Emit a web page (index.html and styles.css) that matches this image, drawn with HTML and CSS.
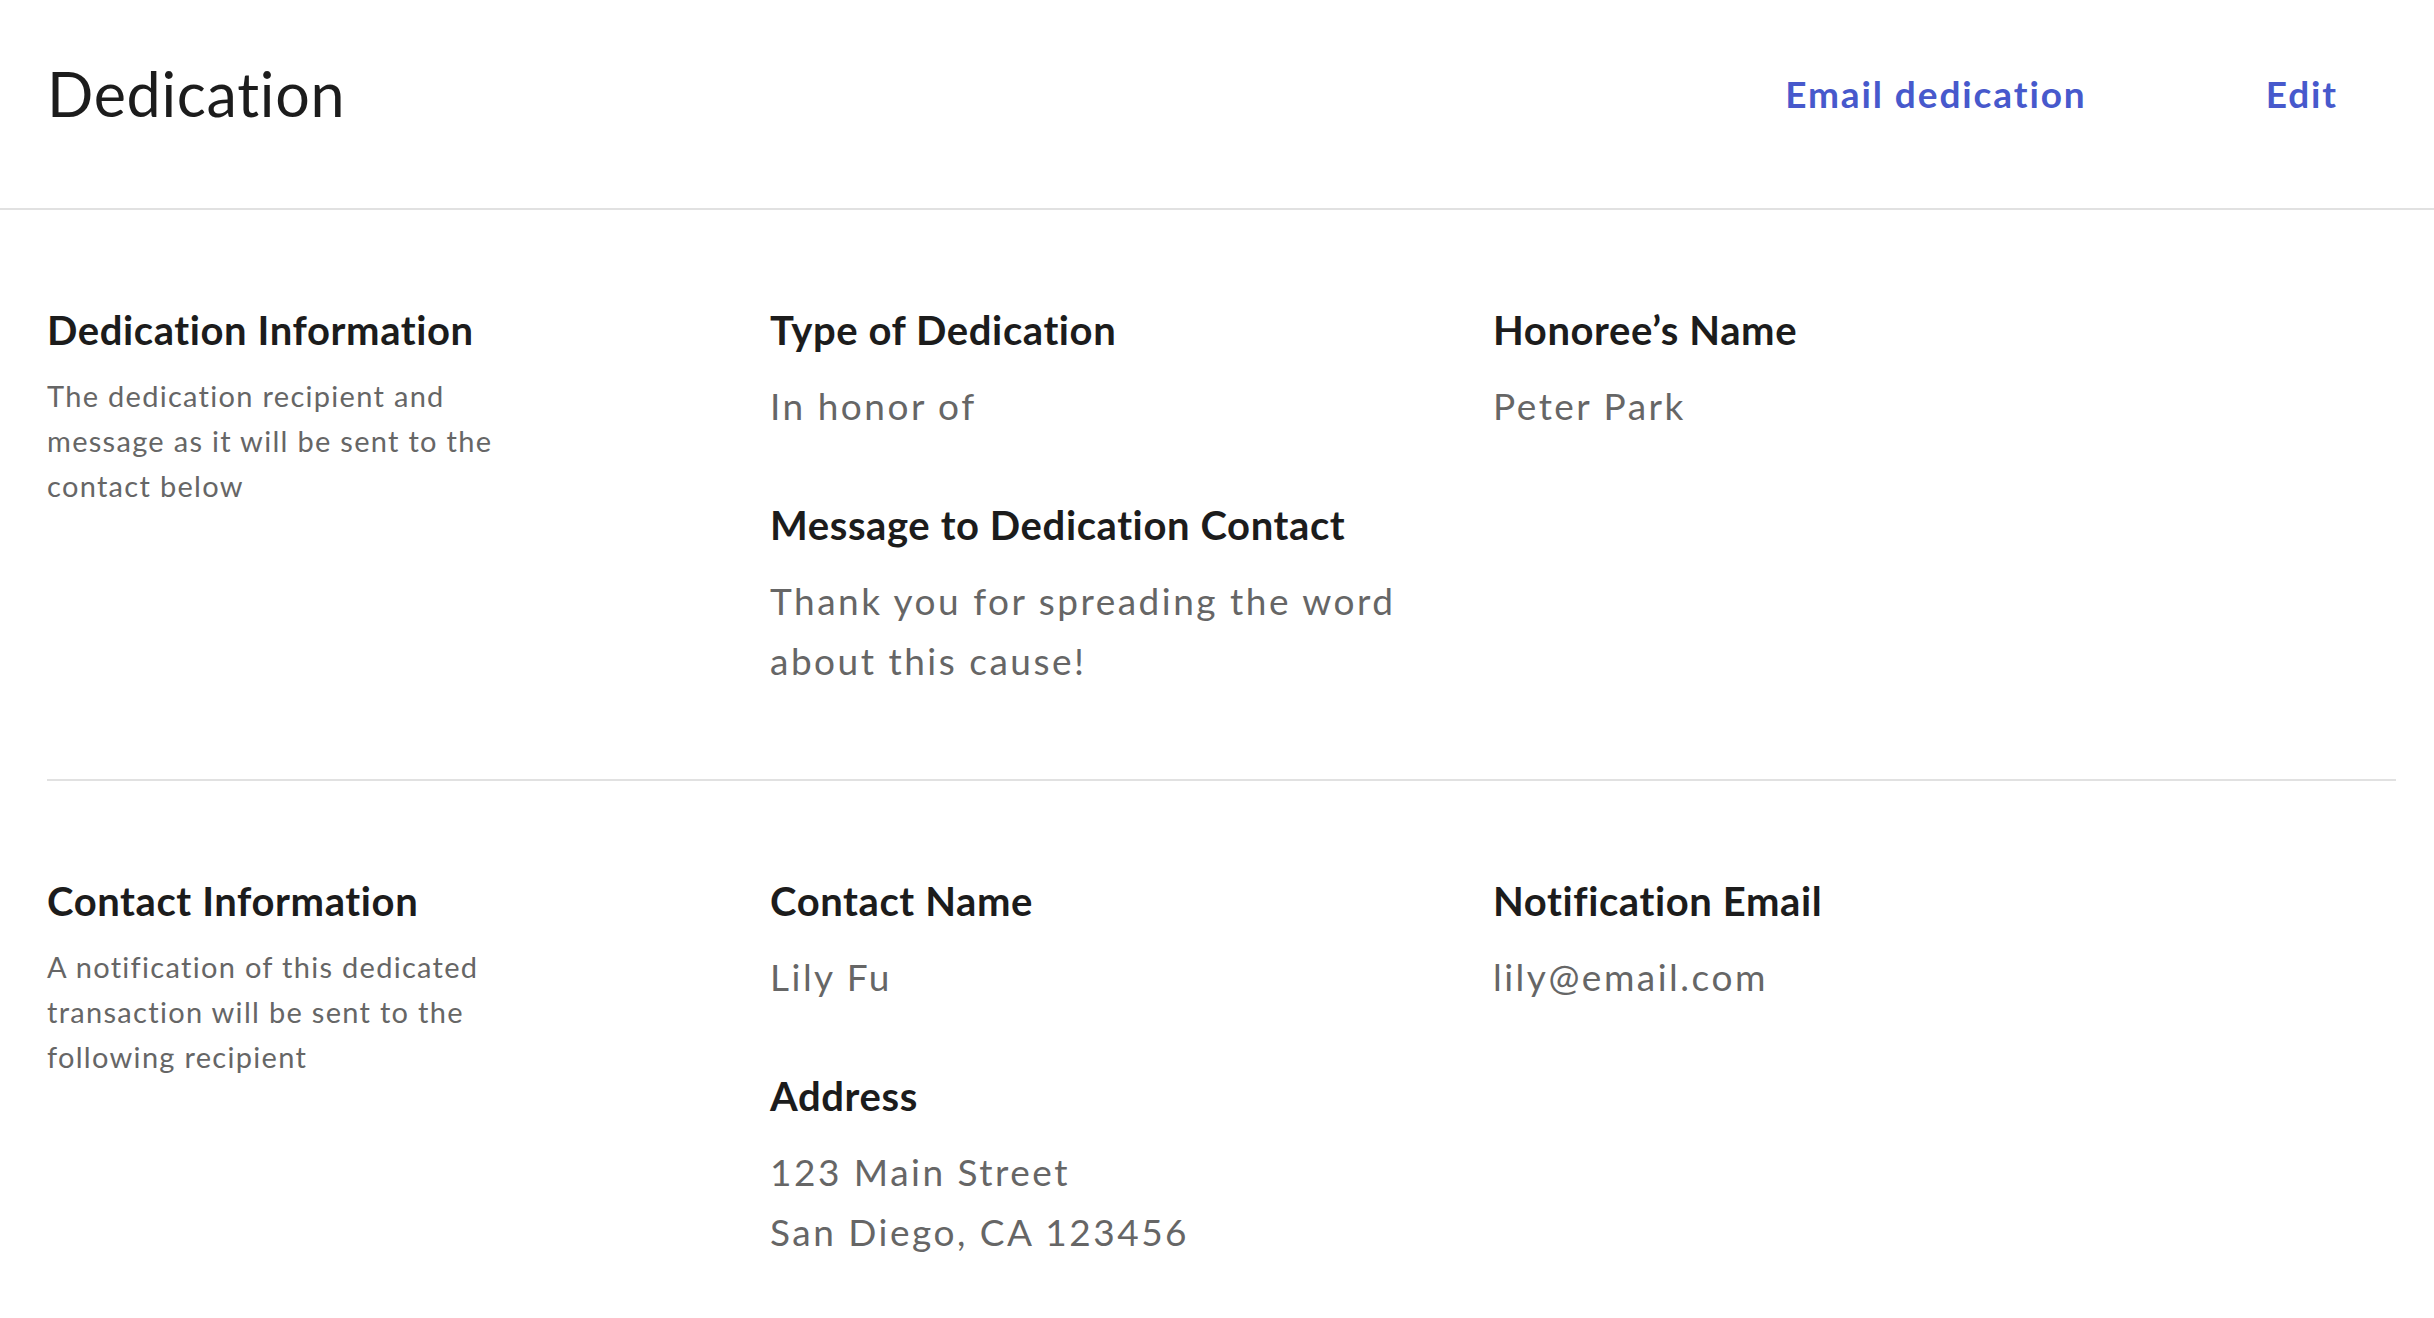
FILE: index.html
```html
<!DOCTYPE html>
<html lang="en">
<head>
<meta charset="UTF-8">
<meta name="viewport" content="width=device-width, initial-scale=1.0">
<title>Dedication</title>
<link rel="stylesheet" href="styles.css">
</head>
<body>
<header class="page-header">
    <h1 class="page-title">Dedication</h1>
    <div class="header-actions">
        <a href="#" class="action-link">Email dedication</a>
        <a href="#" class="action-link">Edit</a>
    </div>
</header>

<div class="content">
    <section class="info-section">
        <div class="section-intro">
            <h2 class="field-label">Dedication Information</h2>
            <p class="section-desc">The dedication recipient and message as it will be sent to the contact below</p>
        </div>
        <div class="field-column">
            <div class="field">
                <h3 class="field-label">Type of Dedication</h3>
                <p class="field-value">In honor of</p>
            </div>
            <div class="field">
                <h3 class="field-label">Message to Dedication Contact</h3>
                <p class="field-value">Thank you for spreading the word about this cause!</p>
            </div>
        </div>
        <div class="field-column">
            <div class="field">
                <h3 class="field-label">Honoree’s Name</h3>
                <p class="field-value">Peter Park</p>
            </div>
        </div>
    </section>

    <section class="info-section">
        <div class="section-intro">
            <h2 class="field-label">Contact Information</h2>
            <p class="section-desc">A notification of this dedicated transaction will be sent to the following recipient</p>
        </div>
        <div class="field-column">
            <div class="field">
                <h3 class="field-label">Contact Name</h3>
                <p class="field-value">Lily Fu</p>
            </div>
            <div class="field">
                <h3 class="field-label">Address</h3>
                <p class="field-value">123 Main Street<br>San Diego, CA 123456</p>
            </div>
        </div>
        <div class="field-column">
            <div class="field">
                <h3 class="field-label">Notification Email</h3>
                <p class="field-value">lily@email.com</p>
            </div>
        </div>
    </section>
</div>
</body>
</html>
```

FILE: styles.css
```css
body {
    margin: 0;
    font-family: Lato, "Open Sans", sans-serif;
    color: #1c1c1c;
    background-color: #fff;
}
h1, h2, h3, p {
    margin: 0;
}
.page-header {
    display: flex;
    align-items: center;
    justify-content: space-between;
    padding: 57px 96px 78px 47px;
    border-bottom: 2px solid #e1e1e1;
}
.page-title {
    font-size: 61px;
    line-height: 73px;
    font-weight: 400;
    letter-spacing: 0.7px;
}
.header-actions {
    display: flex;
    gap: 179px;
}
.action-link {
    font-size: 37px;
    line-height: 44px;
    font-weight: 700;
    color: #4759cc;
    text-decoration: none;
    letter-spacing: 1.9px;
}
.content {
    padding: 0 38px 0 47px;
}
.info-section {
    display: grid;
    grid-template-columns: 723px 723px 1fr;
    padding: 96px 0 88px;
}
.info-section + .info-section {
    border-top: 2px solid #e1e1e1;
}
.field-label {
    font-size: 40px;
    line-height: 48px;
    font-weight: 700;
    letter-spacing: 0.6px;
    color: #1c1c1c;
}
.section-desc {
    max-width: 470px;
    margin-top: 19px;
    font-size: 29px;
    line-height: 45px;
    letter-spacing: 1.3px;
    color: #666;
}
.field-column {
    display: flex;
    flex-direction: column;
    gap: 65px;
    padding-right: 40px;
}
.field-value {
    margin-top: 22px;
    font-size: 37px;
    line-height: 60px;
    letter-spacing: 2.5px;
    color: #666;
}
```
